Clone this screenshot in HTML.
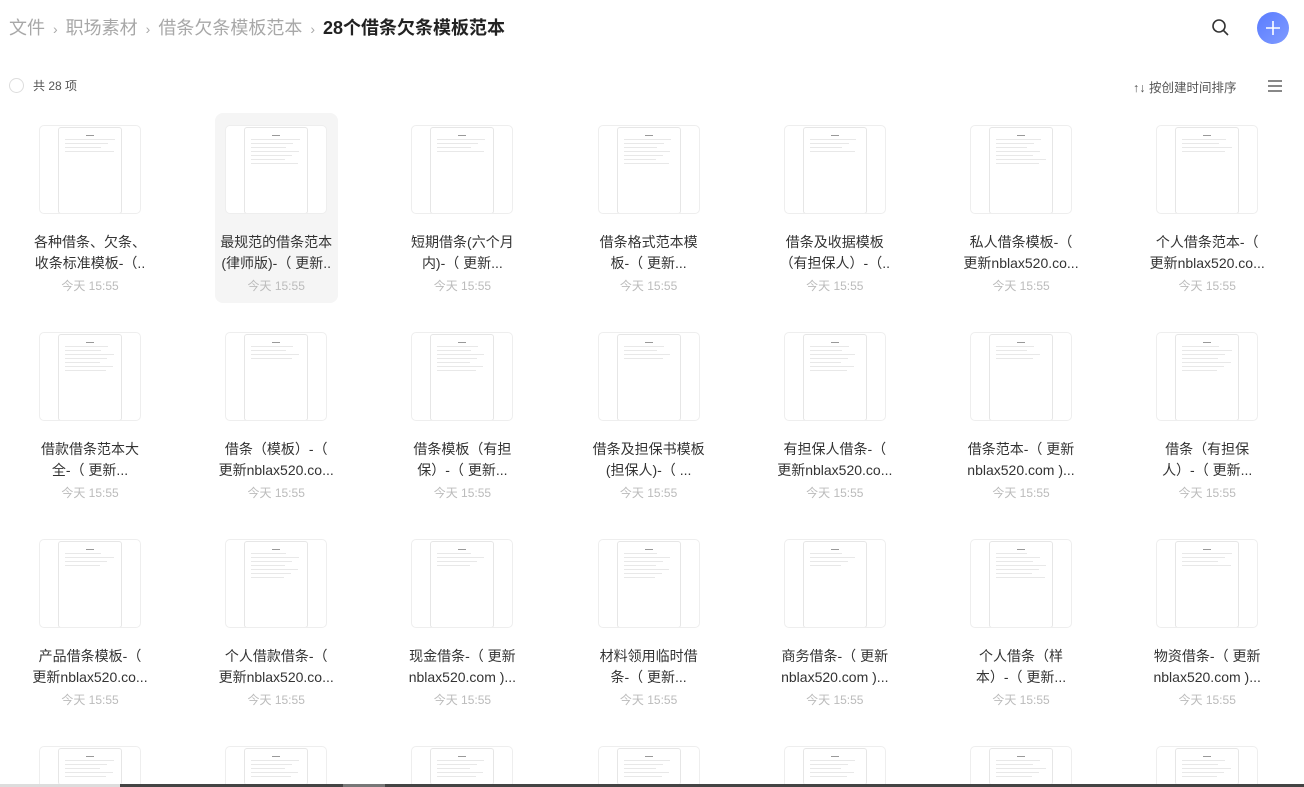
<!DOCTYPE html>
<html style="width:1304px;height:787px;overflow:hidden"><head><meta charset="utf-8">
<style>
*{box-sizing:border-box;margin:0;padding:0}
body{width:1304px;height:787px;overflow:hidden;background:#fff;font-family:"Liberation Sans","Noto Sans CJK SC",sans-serif;position:relative}
.bc{position:absolute;left:9px;top:15px;font-size:18px;color:#a8a8a8;white-space:nowrap;line-height:26px}
.bc .s{font-size:14px;margin:0 8px;color:#aaa}
.bc b{color:#222;font-weight:bold}
.cnt{position:absolute;left:9px;top:77px;font-size:12px;color:#555;display:flex;align-items:center}
.cnt i{width:15px;height:15px;border:1.5px solid #ddd;border-radius:50%;margin-right:9px;display:inline-block}
.sort{position:absolute;left:1133px;top:77px;font-size:12.5px;color:#555}
.menu{position:absolute;left:1268px;top:80px;width:14px}
.menu div{height:1.5px;background:#888;margin-bottom:3.5px}
.plus{position:absolute;left:1257px;top:12px;width:32px;height:32px;border-radius:50%;background:linear-gradient(135deg,#5a7cff,#7f9bff)}
.card{position:absolute;width:123px;height:190px;border-radius:8px}
.card.l{height:50px;overflow:hidden}
.card.l .th{height:38px;border-bottom:none;border-radius:5px 5px 0 0}
.card.l .pg{height:37px;border-bottom:none}
.card.h{background:#f5f5f5}
.th{position:absolute;left:10.5px;top:12px;width:102px;height:89px;border:1px solid #eee;border-radius:5px;background:#fff;overflow:hidden}
.pg{position:absolute;left:18px;top:1px;width:64px;height:87px;border:1px solid #e6e6e6;border-radius:3px;background:#fff;overflow:hidden}
.pg i{display:block;height:1px;background:#e8e8e8;margin:3px 6px 0}
.pg i.t{width:8px;margin:7px auto 3px;background:#999;height:1px}
.nm{position:absolute;left:0;width:123px;top:119px;text-align:center;font-size:14px;color:#333;line-height:21px;white-space:nowrap}
.dt{position:absolute;left:0;width:123px;top:164px;text-align:center;font-size:12px;color:#bbb}
.bar{position:absolute;left:120px;top:784px;width:1184px;height:3px;background:#444}
.bar2{position:absolute;left:343px;top:784px;width:42px;height:3px;background:#777}
.bar0{position:absolute;left:0;top:784px;width:120px;height:3px;background:#ddd}
#g{position:absolute;left:0;top:0;width:1304px;height:784px;overflow:hidden}
</style></head><body>
<div class="bc">文件<span class="s">›</span>职场素材<span class="s">›</span>借条欠条模板范本<span class="s">›</span><b>28个借条欠条模板范本</b></div>
<svg style="position:absolute;left:1211px;top:18px" width="20" height="20" viewBox="0 0 20 20"><circle cx="8" cy="8" r="6" fill="none" stroke="#333" stroke-width="1.6"/><line x1="12.5" y1="12.5" x2="17" y2="17" stroke="#333" stroke-width="1.6"/></svg>
<div class="plus"><svg width="32" height="32" viewBox="0 0 32 32"><path d="M16 9v14M9 16h14" stroke="#fff" stroke-width="1.6"/></svg></div>
<div class="cnt"><i></i>共 28 项</div>
<div class="sort">↑↓ 按创建时间排序</div>
<div class="menu"><div></div><div></div><div></div></div>
<div id="g"></div>
<div class="bar0"></div><div class="bar"></div><div class="bar2"></div>
<script>
var n=[["各种借条、欠条、","收条标准模板-（.."],["最规范的借条范本","(律师版)-（ 更新.."],["短期借条(六个月","内)-（ 更新..."],["借条格式范本模","板-（ 更新..."],["借条及收据模板","（有担保人）-（.."],["私人借条模板-（","更新nblax520.co..."],["个人借条范本-（","更新nblax520.co..."],
["借款借条范本大","全-（ 更新..."],["借条（模板）-（","更新nblax520.co..."],["借条模板（有担","保）-（ 更新..."],["借条及担保书模板","(担保人)-（ ..."],["有担保人借条-（","更新nblax520.co..."],["借条范本-（ 更新","nblax520.com )..."],["借条（有担保","人）-（ 更新..."],
["产品借条模板-（","更新nblax520.co..."],["个人借款借条-（","更新nblax520.co..."],["现金借条-（ 更新","nblax520.com )..."],["材料领用临时借","条-（ 更新..."],["商务借条-（ 更新","nblax520.com )..."],["个人借条（样","本）-（ 更新..."],["物资借条-（ 更新","nblax520.com )..."],
["",""],["",""],["",""],["",""],["",""],["",""],["",""]];
var h="";
for(var i=0;i<28;i++){var r=Math.floor(i/7),c=i%7;var x=90+c*186.2-61.5,y=113+r*207;
var nl=r==3?5:4+((i*3)%6);
var lines='<i class="t"></i>';for(var k=0;k<nl;k++)lines+='<i style="margin-right:'+(6+(k*7+i)%20)+'px"></i>';
h+='<div class="card'+(i==1?' h':'')+(r==3?' l':'')+'" style="left:'+x+'px;top:'+y+'px"><div class="th"><div class="pg">'+lines+'</div></div>';
if(n[i][0])h+='<div class="nm">'+n[i][0]+'<br>'+n[i][1]+'</div><div class="dt">今天 15:55</div>';
h+='</div>';}
document.getElementById("g").innerHTML=h;
</script>
</body></html>
